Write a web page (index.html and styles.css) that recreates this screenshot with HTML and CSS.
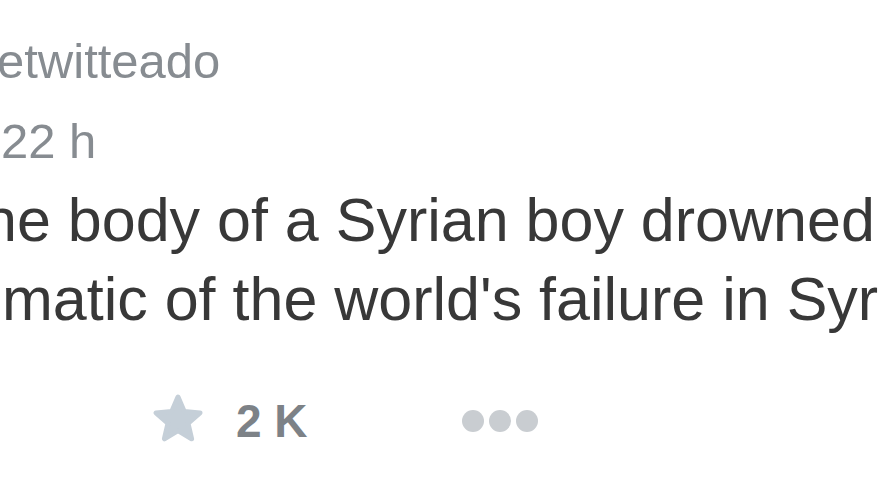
FILE: index.html
```html
<!DOCTYPE html>
<html>
<head>
<meta charset="utf-8">
<link rel="stylesheet" href="styles.css">
</head>
<body>
<div class="tweet">
  <div class="context">etwitteado</div>
  <div class="time">22 h</div>
  <div class="text">
    <div class="line line1">he body of a Syrian boy drowned</div>
    <div class="line line2">matic of the world's failure in Syria</div>
  </div>
  <div class="actions">
    <div class="fav">
      <svg class="star" width="56" height="54" viewBox="0 0 56 54">
        <path d="M28 5 L34.2 19.6 L50 20.9 L38 31.3 L41.6 46.8 L28 38.6 L14.4 46.8 L18 31.3 L6 20.9 L21.8 19.6 Z" fill="#c5cfd8" stroke="#c5cfd8" stroke-width="5" stroke-linejoin="round"/>
      </svg>
      <span class="count">2 K</span>
    </div>
    <div class="more">
      <span class="dot"></span><span class="dot"></span><span class="dot"></span>
    </div>
  </div>
</div>
</body>
</html>
```
FILE: styles.css
```css
html, body {
  margin: 0;
  padding: 0;
  background: #ffffff;
}
body {
  width: 880px;
  height: 495px;
  overflow: hidden;
  font-family: "Liberation Sans", Arial, sans-serif;
}
.tweet {
  padding-top: 21px;
}
.context {
  font-size: 49px;
  line-height: 80px;
  height: 80px;
  color: #878c91;
  margin-left: -3px;
  white-space: nowrap;
}
.time {
  font-size: 49px;
  line-height: 80px;
  height: 80px;
  color: #878c91;
  margin-left: 1px;
  white-space: nowrap;
}
.text {
  color: #383838;
  font-size: 61px;
  line-height: 79px;
}
.line {
  white-space: nowrap;
  height: 79px;
}
.line1 {
  margin-left: -17px;
}
.line2 {
  margin-left: 2px;
}
.actions {
  margin-top: 52px;
  height: 60px;
  display: flex;
  align-items: center;
  padding-left: 150px;
}
.fav {
  display: flex;
  align-items: center;
  gap: 30px;
  width: 312px;
}
.star {
  display: block;
  margin-top: -4px;
}
.count {
  font-size: 46px;
  font-weight: bold;
  color: #7d8287;
  line-height: 60px;
}
.more {
  display: flex;
  gap: 5px;
  align-items: center;
}
.dot {
  width: 22px;
  height: 22px;
  border-radius: 50%;
  background: #c9cdd1;
  display: block;
}
```
